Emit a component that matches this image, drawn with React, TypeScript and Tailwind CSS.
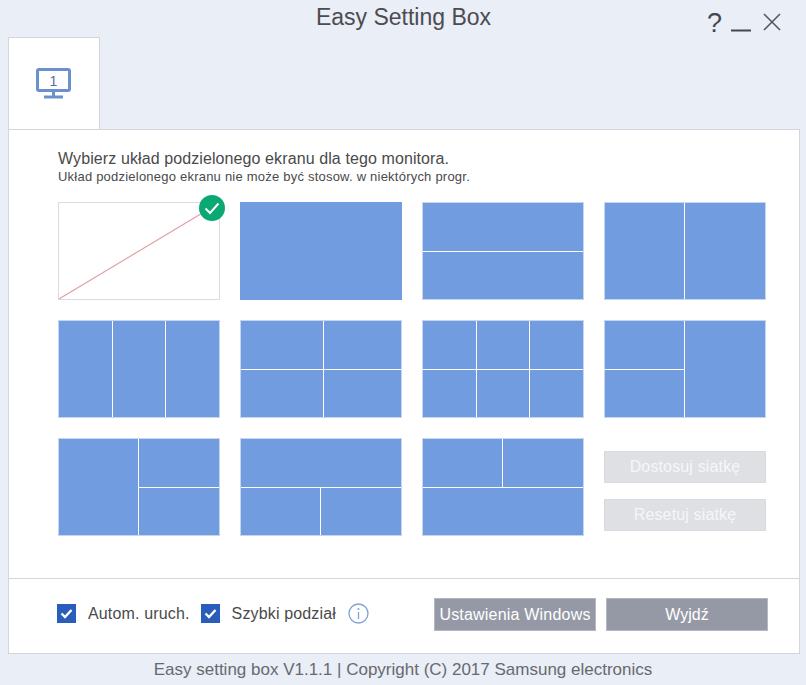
import React from "react";

const Cell = ({ className = "" }: { className?: string }) => <div className={`bg-[#719ce0] ${className}`} />;

const Frame = ({ className = "", children }: { className?: string; children: React.ReactNode }) => (
  <div className={`h-[98px] border border-[#c6d6ee] bg-white grid gap-px ${className}`}>{children}</div>
);

export default function App() {
  return (
    <div className="w-[806px] h-[685px] overflow-hidden bg-[#eaeef6] flex flex-col font-['Liberation_Sans',Arial,sans-serif]">
      <div className="h-[37px] grid grid-cols-[1fr_auto_1fr] items-start">
        <div />
        <div className="text-[23px] leading-[34px] text-[#4a4c52] pl-[1px]">Easy Setting Box</div>
        <div className="flex justify-end items-start gap-[11px] pr-[25px] pt-[9px]">
          <span className="text-[27px] leading-[28px] text-[#44474d]">?</span>
          <svg width="20" height="28" viewBox="0 0 20 28" className="-ml-[2px]"><path d="M0 21.5H20" stroke="#44474d" strokeWidth="2" /></svg>
          <svg width="18" height="18" viewBox="0 0 18 18" className="ml-[1px] mt-[4px]"><path d="M1 1L17 17M17 1L1 17" stroke="#55585e" strokeWidth="1.6" /></svg>
        </div>
      </div>

      <div className="pl-[8px] h-[93px]">
        <div className="w-[92px] h-[93px] bg-white border border-[#d4d6da] border-b-0 flex items-center justify-center pb-[1px]">
          <svg width="36" height="31" viewBox="0 0 36 31">
            <rect x="1.5" y="1.5" width="32" height="21" rx="1.5" fill="none" stroke="#6a91cc" strokeWidth="3" />
            <path d="M17.5 23V28" stroke="#6a91cc" strokeWidth="3" />
            <path d="M8 29H27" stroke="#6a91cc" strokeWidth="3" />
            <text x="17.5" y="18" textAnchor="middle" fontSize="14" fill="#54709c" fontFamily="Liberation Sans">1</text>
          </svg>
        </div>
      </div>

      <div className="ml-[8px] mr-[6px] -mt-px h-[525px] bg-white border border-[#d4d6da] flex flex-col">
        <div className="flex-1 pl-[49px] pr-[32px] pt-[19px]">
          <div className="text-[16px] leading-[19px] tracking-[0.1px] text-[#4a4a4a]">Wybierz układ podzielonego ekranu dla tego monitora.</div>
          <div className="text-[13px] leading-[14px] tracking-[0.22px] mt-[2px] text-[#4a4a4a]">Układ podzielonego ekranu nie może być stosow. w niektórych progr.</div>
          <div className="grid grid-cols-[162px_162px_162px_162px] gap-x-[20px] gap-y-[20px] mt-[18px]">
            <div className="relative h-[98px] border border-[#d9dce2] bg-white">
              <svg className="w-full h-full block" viewBox="0 0 160 96" preserveAspectRatio="none">
                <path d="M0 96L160 0" stroke="#e3a3a6" strokeWidth="1.2" />
              </svg>
              <svg className="absolute -top-[8px] -right-[6px]" width="26" height="26" viewBox="0 0 26 26">
                <circle cx="13" cy="13" r="13" fill="#0aa872" />
                <path d="M6.5 13.5L11 18L19.5 8.5" fill="none" stroke="#fff" strokeWidth="2" />
              </svg>
            </div>

            <div className="h-[98px] bg-[#719ce0]" />

            <Frame className="grid-rows-2">
              <Cell /><Cell />
            </Frame>
            <Frame className="grid-cols-[79px_1fr]">
              <Cell /><Cell />
            </Frame>

            <Frame className="grid-cols-3">
              <Cell /><Cell /><Cell />
            </Frame>
            <Frame className="grid-cols-[82px_1fr] grid-rows-2">
              <Cell /><Cell /><Cell /><Cell />
            </Frame>
            <Frame className="grid-cols-3 grid-rows-2">
              <Cell /><Cell /><Cell /><Cell /><Cell /><Cell />
            </Frame>
            <Frame className="grid-cols-[79px_1fr] grid-rows-2">
              <Cell /><Cell className="row-span-2" /><Cell />
            </Frame>

            <Frame className="grid-cols-[79px_1fr] grid-rows-2">
              <Cell className="row-span-2" /><Cell /><Cell />
            </Frame>
            <Frame className="grid-cols-[79px_1fr] grid-rows-2">
              <Cell className="col-span-2" /><Cell /><Cell />
            </Frame>
            <Frame className="grid-cols-[79px_1fr] grid-rows-2">
              <Cell /><Cell /><Cell className="col-span-2" />
            </Frame>

            <div className="flex flex-col gap-[16px] pt-[13px]">
              <div className="h-[32px] bg-[#dfe0e4] border border-[#d9dadf] text-[16px] tracking-[0.15px] text-[#f6f6f8] flex items-center justify-center">Dostosuj siatkę</div>
              <div className="h-[32px] bg-[#dfe0e4] border border-[#d9dadf] text-[16px] tracking-[0.15px] text-[#f6f6f8] flex items-center justify-center">Resetuj siatkę</div>
            </div>
          </div>
        </div>

        <div className="h-[75px] border-t border-[#d4d6da] flex items-center pl-[48px] pr-[31px] pb-[5px]">
          <svg width="19" height="19" viewBox="0 0 19 19">
            <rect width="19" height="19" fill="#2a5cbc" />
            <path d="M4.5 9.5L8 13L14.5 6" fill="none" stroke="#fff" strokeWidth="2.4" />
          </svg>
          <span className="ml-[12px] text-[16px] tracking-[0.15px] text-[#4a4a4a]">Autom. uruch.</span>
          <svg width="19" height="19" viewBox="0 0 19 19" className="ml-[11px]">
            <rect width="19" height="19" fill="#2a5cbc" />
            <path d="M4.5 9.5L8 13L14.5 6" fill="none" stroke="#fff" strokeWidth="2.4" />
          </svg>
          <span className="ml-[12px] text-[16px] tracking-[0.15px] text-[#4a4a4a]">Szybki podział</span>
          <svg width="21" height="21" viewBox="0 0 21 21" className="ml-[12px]">
            <circle cx="10.5" cy="10.5" r="9.5" fill="none" stroke="#7fa3d8" strokeWidth="1.3" />
            <circle cx="10.5" cy="6" r="1" fill="#7fa3d8" />
            <path d="M10.5 9V16" stroke="#7fa3d8" strokeWidth="1.3" />
          </svg>
          <div className="ml-auto flex gap-[10px] mt-[2px]">
            <div className="w-[162px] h-[33px] bg-[#9599a5] border border-[#b5b8c0] text-[16px] tracking-[0.2px] text-white flex items-center justify-center">Ustawienia Windows</div>
            <div className="w-[162px] h-[33px] bg-[#9599a5] border border-[#b5b8c0] text-[16px] text-white flex items-center justify-center">Wyjdź</div>
          </div>
        </div>
      </div>

      <div className="flex-1 flex items-center justify-center text-[17px] text-[#666a70]">Easy setting box V1.1.1 | Copyright (C) 2017 Samsung electronics</div>
    </div>
  );
}
